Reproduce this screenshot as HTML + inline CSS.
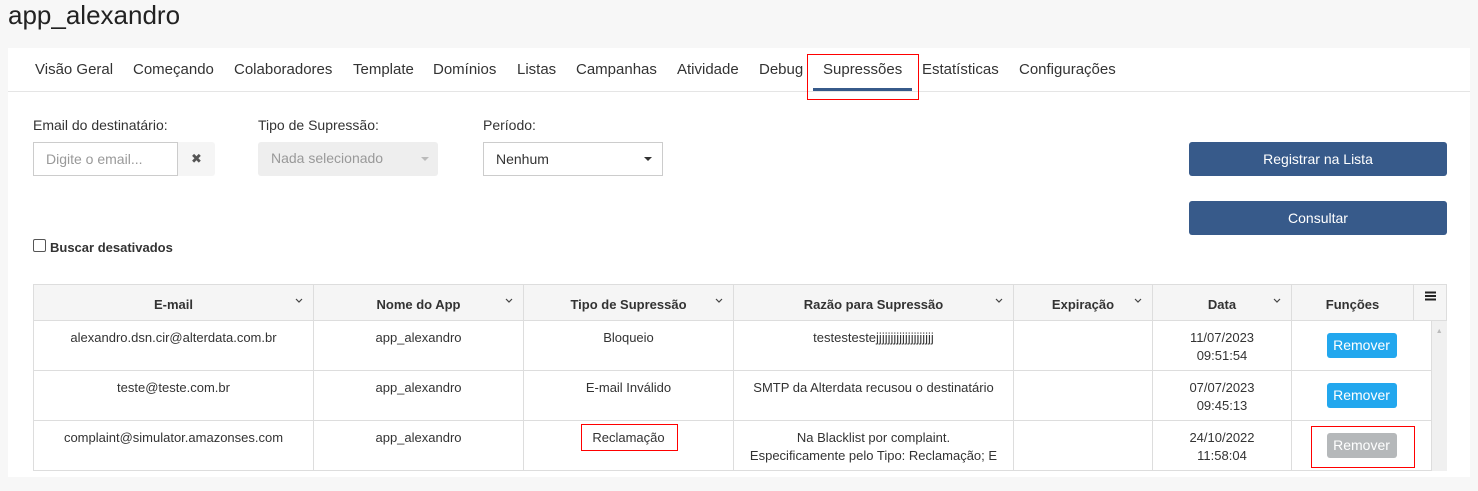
<!DOCTYPE html>
<html><head><meta charset="utf-8"><style>
*{box-sizing:border-box;margin:0;padding:0}
body{width:1478px;height:491px;background:#f7f7f7;font-family:"Liberation Sans",sans-serif;color:#333;position:relative;overflow:hidden;font-size:14px}
.a{position:absolute}
h1{position:absolute;left:8px;top:0;font-size:26px;font-weight:normal;color:#222}
.panel{position:absolute;left:8px;top:48px;width:1462px;height:429px;background:#fff}
.nav{position:absolute;left:0;top:0;width:100%;height:44px;border-bottom:1px solid #e5e5e5}
.nav span{position:absolute;top:13px;font-size:15px;color:#333}
.lbl{font-size:14px;color:#333}
.btn{position:absolute;background:#375a8a;color:#fff;border-radius:3px;text-align:center;font-size:14px}
table{position:absolute;border-collapse:collapse;font-size:13px;table-layout:fixed}
td,th{border:1px solid #ddd;text-align:center;vertical-align:top}
th{background:#f5f5f5;height:36px;font-weight:bold;padding-top:12px;position:relative}
th svg{position:absolute;right:10px;top:13px}
td{height:50px;padding-top:8px;line-height:18px}
.rm{display:inline-block;background:#22a7ee;color:#fff;border-radius:3px;width:70px;font-size:14px;line-height:25px;margin-top:4px}
.car{position:absolute;width:0;height:0;border-left:4px solid transparent;border-right:4px solid transparent;border-top:4px solid #333}
</style></head><body>
<h1>app_alexandro</h1>
<div class="panel">
<div class="nav">
<span style="left:27px">Visão Geral</span><span style="left:125px">Começando</span><span style="left:226px">Colaboradores</span><span style="left:345px">Template</span><span style="left:425px">Domínios</span><span style="left:509px">Listas</span><span style="left:568px">Campanhas</span><span style="left:669px">Atividade</span><span style="left:751px">Debug</span><span style="left:815px">Supressões</span><span style="left:914px">Estatísticas</span><span style="left:1011px">Configurações</span>
<div class="a" style="left:805px;top:40px;width:99px;height:3px;background:#375a8a"></div>
<div class="a" style="left:799px;top:6px;width:112px;height:46px;border:1px solid red"></div>
</div>
</div>
<div class="a lbl" style="left:33px;top:117px">Email do destinatário:</div>
<div class="a lbl" style="left:258px;top:117px">Tipo de Supressão:</div>
<div class="a lbl" style="left:483px;top:117px">Período:</div>
<div class="a" style="left:33px;top:142px;width:145px;height:34px;border:1px solid #ccc;color:#999;padding:8px 12px">Digite o email...</div>
<div class="a" style="left:178px;top:142px;width:37px;height:34px;background:#f5f5f5;border-radius:0 3px 3px 0;text-align:center;line-height:34px;font-size:13px;color:#555">✖</div>
<div class="a" style="left:258px;top:142px;width:180px;height:34px;background:#eee;border-radius:3px;color:#999;padding:8px 13px">Nada selecionado<div class="car" style="right:9px;top:15px;border-top-color:#bbb"></div></div>
<div class="a" style="left:483px;top:142px;width:180px;height:34px;border:1px solid #ccc;padding:8px 12px">Nenhum<div class="car" style="right:10px;top:14px"></div></div>
<div class="btn" style="left:1189px;top:142px;width:258px;height:34px;line-height:34px">Registrar na Lista</div>
<div class="btn" style="left:1189px;top:201px;width:258px;height:34px;line-height:34px">Consultar</div>
<div class="a" style="left:33px;top:239px;width:13px;height:13px;border:1px solid #555;border-radius:2px"></div>
<div class="a" style="left:50px;top:240px;font-size:13px;font-weight:bold">Buscar desativados</div>
<table style="left:33px;top:284px;width:1413px">
<colgroup><col style="width:280px"><col style="width:210px"><col style="width:210px"><col style="width:280px"><col style="width:139px"><col style="width:139px"><col style="width:122px"><col style="width:33px"></colgroup>
<tr><th>E-mail<svg width="8" height="5"><path d="M1 1l3 3 3-3" stroke="#444" fill="none" stroke-width="1.2"/></svg></th><th>Nome do App<svg width="8" height="5"><path d="M1 1l3 3 3-3" stroke="#444" fill="none" stroke-width="1.2"/></svg></th><th>Tipo de Supressão<svg width="8" height="5"><path d="M1 1l3 3 3-3" stroke="#444" fill="none" stroke-width="1.2"/></svg></th><th>Razão para Supressão<svg width="8" height="5"><path d="M1 1l3 3 3-3" stroke="#444" fill="none" stroke-width="1.2"/></svg></th><th>Expiração<svg width="8" height="5"><path d="M1 1l3 3 3-3" stroke="#444" fill="none" stroke-width="1.2"/></svg></th><th>Data<svg width="8" height="5"><path d="M1 1l3 3 3-3" stroke="#444" fill="none" stroke-width="1.2"/></svg></th><th>Funções</th><th style="padding-top:4px"><svg style="position:static" width="11" height="10"><path d="M0 1.5h11M0 5h11M0 8.5h11" stroke="#222" stroke-width="2"/></svg></th></tr>
</table>
<table style="left:33px;top:320px;width:1413px">
<colgroup><col style="width:280px"><col style="width:210px"><col style="width:210px"><col style="width:280px"><col style="width:139px"><col style="width:139px"><col style="width:140px"><col style="width:15px"></colgroup>
<tr><td>alexandro.dsn.cir@alterdata.com.br</td><td>app_alexandro</td><td>Bloqueio</td><td>testestestejjjjjjjjjjjjjjjjjjjj</td><td></td><td>11/07/2023<br>09:51:54</td><td><span class="rm">Remover</span></td><td rowspan="3" style="background:#f0f0f0;border:none;padding-top:2px;font-size:7px;color:#bbb">▲</td></tr>
<tr><td>teste@teste.com.br</td><td>app_alexandro</td><td>E-mail Inválido</td><td>SMTP da Alterdata recusou o destinatário</td><td></td><td>07/07/2023<br>09:45:13</td><td><span class="rm">Remover</span></td></tr>
<tr><td>complaint@simulator.amazonses.com</td><td>app_alexandro</td><td>Reclamação</td><td><div style="height:41px;overflow:hidden">Na Blacklist por complaint.<br>Especificamente pelo Tipo: Reclamação; E</div></td><td></td><td>24/10/2022<br>11:58:04</td><td><span class="rm" style="background:#b5b8ba">Remover</span></td></tr>
</table>
<div class="a" style="left:581px;top:424px;width:97px;height:27px;border:1px solid red"></div>
<div class="a" style="left:1311px;top:426px;width:104px;height:42px;border:1px solid red"></div>
<div class="a" style="left:0;top:477px;width:1478px;height:14px;background:#f7f7f7"></div>
</body></html>
